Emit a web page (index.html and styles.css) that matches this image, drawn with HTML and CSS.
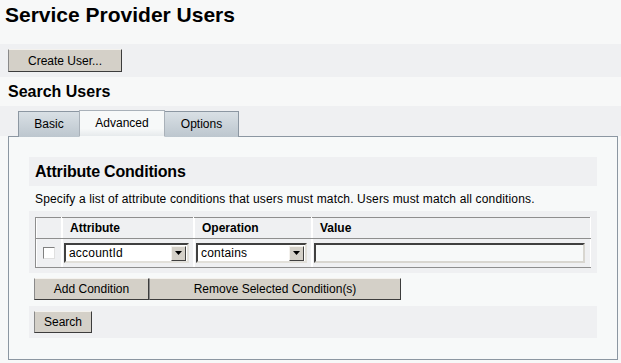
FILE: index.html
```html
<!DOCTYPE html>
<html lang="en">
<head>
  <meta charset="UTF-8" />
  <title>Service Provider Users</title>
  <link rel="stylesheet" href="styles.css">
</head>
<body>

  <h1 class="page-title">Service Provider Users</h1>

  <div class="button-bar">
    <button class="btn btn-create">Create User...</button>
  </div>

  <h2 class="section-title">Search Users</h2>

  <!-- Tabs -->
  <div class="tabs">
    <div class="tab">Basic</div>
    <div class="tab active">Advanced</div>
    <div class="tab">Options</div>
  </div>

  <div class="panel">
    <div class="sub-header">Attribute Conditions</div>
    <p class="help">Specify a list of attribute conditions that users must match. Users must match all conditions.</p>

    <div class="table-bar">
      <table class="conditions">
        <tr>
          <th class="col-check"></th>
          <th class="col-attr">Attribute</th>
          <th class="col-op">Operation</th>
          <th>Value</th>
        </tr>
        <tr>
          <td class="col-check"><span class="checkbox"></span></td>
          <td>
            <div class="combo combo-attr">
              <span class="combo-text">accountId</span>
              <span class="combo-arrow">
                <svg width="7" height="4" viewBox="0 0 7 4"><path d="M0 0h7L3.5 4z" fill="#000"/></svg>
              </span>
            </div>
          </td>
          <td>
            <div class="combo combo-op">
              <span class="combo-text">contains</span>
              <span class="combo-arrow">
                <svg width="7" height="4" viewBox="0 0 7 4"><path d="M0 0h7L3.5 4z" fill="#000"/></svg>
              </span>
            </div>
          </td>
          <td><div class="text-input"></div></td>
        </tr>
      </table>
    </div>

    <div class="row-buttons">
      <button class="btn btn-add">Add Condition</button>
      <button class="btn btn-remove">Remove Selected Condition(s)</button>
    </div>

    <div class="search-bar">
      <button class="btn btn-search">Search</button>
    </div>
  </div>

</body>
</html>
```

FILE: styles.css
```css
* {
  box-sizing: border-box;
  margin: 0;
  padding: 0;
  font-family: 'Liberation Sans', Arial, sans-serif;
}

body {
  background: #f7f8f8;
  color: #000;
  font-size: 12px;
  width: 621px;
  height: 363px;
  overflow: hidden;
}

.page-title {
  font-size: 21px;
  font-weight: bold;
  height: 44px;
  padding: 4px 0 0 5px;
  line-height: 22px;
}

.button-bar {
  background: #eff0f2;
  height: 33px;
  padding: 5px 8px 0;
}

.btn {
  background: #d4d0c8;
  border: 1px solid;
  border-color: #f4f2ee #3c3c3c #3c3c3c #8a8a8a;
  font-size: 12px;
  color: #000;
  height: 23px;
  cursor: pointer;
}

.btn-create {
  width: 114px;
}

.section-title {
  font-size: 16px;
  font-weight: bold;
  height: 29px;
  line-height: 29px;
  padding-left: 8px;
}

/* tabs */
.tabs {
  background: #eff0f2;
  height: 30px;
  display: flex;
  align-items: flex-end;
  padding-left: 18px;
}

.tab {
  height: 26px;
  margin-bottom: -1px;
  border: 1px solid #8c97a2;
  border-bottom: none;
  background: linear-gradient(#d9e0e5, #bcc6ce);
  line-height: 24px;
  text-align: center;
  font-size: 12px;
  position: relative;
}

.tab:nth-child(1) { width: 62px; }
.tab:nth-child(2) { width: 86px; margin-left: -1px; }
.tab:nth-child(3) { width: 75px; margin-left: -1px; }

.tab.active {
  background: linear-gradient(#f7f9f9 70%, #e6eaec);
  border-color: #a9b1b9;
  border-bottom: 1px solid #f7f9f9;
  height: 27px;
  z-index: 1;
}

.panel {
  background: #f7f9f9;
  border: 1px solid #8c97a2;
  margin: 0 3px 0 8px;
  height: 224px;
  padding: 20px 20px 0;
}

.sub-header {
  background: #eff0f2;
  height: 29px;
  line-height: 29px;
  padding-left: 6px;
  font-size: 16px;
  font-weight: bold;
  letter-spacing: -0.2px;
}

.help {
  height: 25px;
  line-height: 26px;
  padding-left: 6px;
  font-size: 12px;
  letter-spacing: 0.15px;
}

.table-bar {
  background: #eff0f2;
  height: 62px;
  padding: 6px 5px 0 6px;
}

.conditions {
  width: 556px;
  border-collapse: collapse;
  border: 1px solid #7b7b7b;
}

.conditions th,
.conditions td {
  border: 1px solid #999;
  border-color: #8e8e8e #fff #8e8e8e #8e8e8e;
  box-shadow: inset 1px 0 0 #fff;
}

.conditions th {
  height: 21px;
  text-align: left;
  padding-left: 8px;
  font-size: 12px;
  font-weight: bold;
}

.conditions td {
  height: 29px;
  padding: 0 4px 0 2px;
}

.col-check { width: 26px; }
.col-attr { width: 132px; }
.col-op { width: 118px; }

.conditions td.col-check {
  padding: 0 0 0 7px;
}

.checkbox {
  display: block;
  width: 12px;
  height: 12px;
  background: #fff;
  border: 1px solid;
  border-color: #808080 #e0e0e0 #e0e0e0 #808080;
}

.combo {
  height: 20px;
  background: #fff;
  border: 2px solid;
  border-color: #404040 #e2e0da #e2e0da #404040;
  display: flex;
  align-items: center;
  justify-content: space-between;
  padding: 0 1px 0 3px;
}

.combo-attr { width: 125px; }
.combo-op { width: 111px; }

.combo-text {
  font-size: 12px;
  letter-spacing: 0.2px;
}

.combo-arrow {
  width: 15px;
  height: 15px;
  background: #d4d0c8;
  border: 1px solid;
  border-color: #f4f2ee #404040 #404040 #f4f2ee;
  display: flex;
  align-items: center;
  justify-content: center;
}

.text-input {
  width: 271px;
  height: 20px;
  background: #f7f9f9;
  border: 2px solid;
  border-color: #404040 #d8d6d0 #d8d6d0 #404040;
}

.row-buttons {
  display: flex;
  padding: 5px 0 6px 5px;
}

.btn-add {
  width: 115px;
  height: 22px;
}

.btn-remove {
  width: 252px;
  height: 22px;
}

.search-bar {
  background: #eff0f2;
  height: 32px;
  padding: 5px;
}

.btn-search {
  width: 58px;
  height: 22px;
}
```
